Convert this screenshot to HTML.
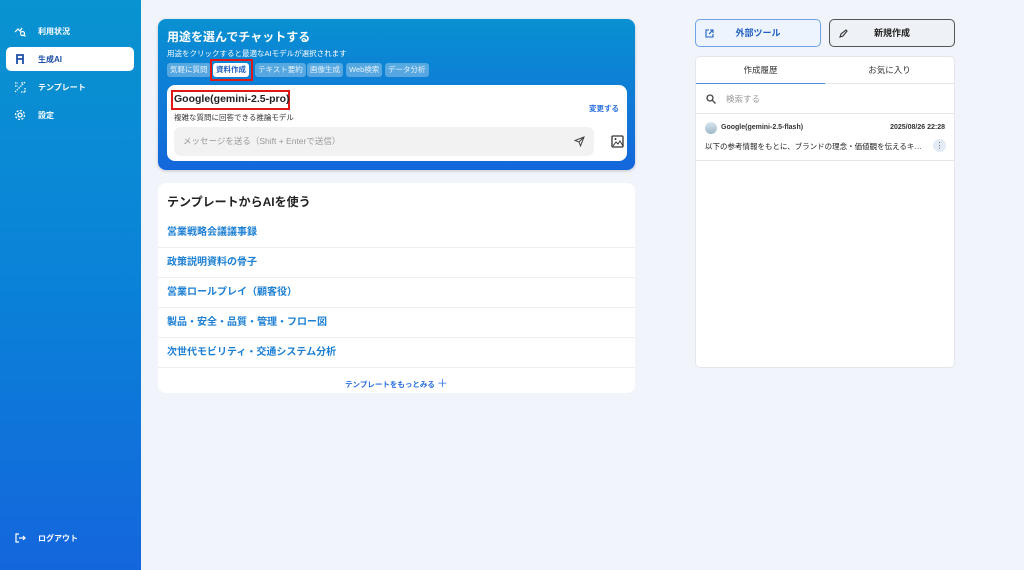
<!DOCTYPE html>
<html><head><meta charset="utf-8"><style>
*{box-sizing:border-box;margin:0;padding:0}
body{width:1024px;height:570px;background:#f1f5fb;font-family:"Liberation Sans","Noto Sans CJK JP",sans-serif;position:relative;overflow:hidden}
.side{position:absolute;left:0;top:0;width:141px;height:570px;background:linear-gradient(180deg,#0993d0 0%,#0a82d8 50%,#1466dc 100%)}
.nav{position:absolute;left:6px;width:128px;height:24px;color:#fff;font-size:8px;font-weight:bold;display:flex;align-items:center;padding-left:8px}
.nav svg{margin-right:12px}
.nav.act{background:#fff;color:#1e4fa8;border-radius:5px}
.card{position:absolute;border-radius:8px}
.hero{left:158px;top:19px;width:477px;height:151px;background:linear-gradient(180deg,#0991d2,#1467db);box-shadow:0 1px 3px rgba(0,0,0,.2)}
.chip{position:absolute;top:44px;height:14px;background:rgba(255,255,255,.3);color:#e8f2fb;font-size:7.5px;border-radius:3px;line-height:14px;padding:0 3px}
.inner{position:absolute;left:9px;top:66px;width:460px;height:76px;background:#fff;border-radius:8px}
.tpl{left:158px;top:183px;width:477px;height:210px;background:#fff}
.row{position:absolute;left:0;width:477px;height:30px;border-bottom:1.5px solid #eceff3;color:#1c7fd3;font-size:10px;font-weight:bold;padding-left:9px;line-height:30px}
.btn{position:absolute;top:19px;width:126px;height:28px;border-radius:5px;font-size:9px;font-weight:bold;text-align:center;line-height:26px}
</style></head><body>
<div class="side">
<div class="nav" style="top:19px"><svg width="12" height="12" viewBox="0 0 12 12" fill="none" stroke="#fff" stroke-width="1.2"><path d="M1 7l3-3 2 2 2-3"/><circle cx="8.5" cy="8.5" r="2"/><path d="M10 10l1.5 1.5"/></svg>利用状況</div>
<div class="nav act" style="top:47px"><svg width="12" height="12" viewBox="0 0 12 12" fill="none" stroke="#1e4fa8" stroke-width="1.8"><path d="M3 11V2h6v9M3 6h6"/></svg>生成AI</div>
<div class="nav" style="top:75px"><svg width="12" height="12" viewBox="0 0 12 12" fill="none" stroke="#fff" stroke-width="1.2"><path d="M1 2h3M1 5h3M8 1v3M1 11l10-10M7 11h4M11 7v4" stroke-dasharray="1.5 1"/></svg>テンプレート</div>
<div class="nav" style="top:103px"><svg width="12" height="12" viewBox="0 0 12 12" fill="none" stroke="#fff" stroke-width="1.3"><circle cx="6" cy="6" r="2"/><circle cx="6" cy="6" r="4.5" stroke-dasharray="2 1.5"/></svg>設定</div>
<div class="nav" style="top:526px"><svg width="12" height="12" viewBox="0 0 12 12" fill="none" stroke="#fff" stroke-width="1.2"><path d="M5 2H2v8h3M5 6h6M9 4l2 2-2 2"/></svg>ログアウト</div>
</div>
<div class="card hero">
<div style="position:absolute;left:9px;top:9px;color:#fff;font-size:12px;font-weight:bold">用途を選んでチャットする</div>
<div style="position:absolute;left:9px;top:29px;color:#fff;font-size:7.5px">用途をクリックすると最適なAIモデルが選択されます</div>
<div class="chip" style="left:9px">気軽に質問</div>
<div class="chip" style="left:55px;background:#fff;color:#1e5fc0;font-weight:bold">資料作成</div>
<div style="position:absolute;left:52px;top:40px;width:43px;height:22px;border:2px solid #e01818"></div>
<div class="chip" style="left:97px">テキスト要約</div>
<div class="chip" style="left:149px">画像生成</div>
<div class="chip" style="left:188px">Web検索</div>
<div class="chip" style="left:227px">データ分析</div>
<div class="inner">
<div style="position:absolute;left:4px;top:5px;width:119px;height:20px;border:2px solid #e01818"></div>
<div style="position:absolute;left:7px;top:8px;font-size:10.5px;font-weight:bold;color:#222">Google(gemini-2.5-pro)</div>
<div style="position:absolute;left:7px;top:27px;font-size:7.5px;color:#333">複雑な質問に回答できる推論モデル</div>
<div style="position:absolute;right:8px;top:18px;font-size:7.5px;font-weight:bold;color:#2a6fe0">変更する</div>
<div style="position:absolute;left:7px;top:42px;width:420px;height:29px;background:#f2f2f3;border-radius:7px;font-size:8.5px;color:#999;line-height:29px;padding-left:9px">メッセージを送る（Shift + Enterで送信）<svg style="position:absolute;right:9px;top:9px" width="11" height="11" viewBox="0 0 11 11" fill="none" stroke="#444" stroke-width="1"><path d="M10 1L1 4.5l4 1.5 1.5 4z M10 1L5 6"/></svg></div>
<svg style="position:absolute;left:444px;top:50px" width="13" height="13" viewBox="0 0 13 13"><rect x="1" y="1" width="11" height="11" rx="1" fill="none" stroke="#333" stroke-width="1.3"/><path d="M2 11l3-4 2 2 2-3 3 5" fill="none" stroke="#333"/><circle cx="4.5" cy="4" r="1" fill="#333"/></svg>
</div>
</div>
<div class="card tpl">
<div style="position:absolute;left:9px;top:10px;font-size:12px;font-weight:bold;color:#222">テンプレートからAIを使う</div>
<div class="row" style="top:35px">営業戦略会議議事録</div>
<div class="row" style="top:65px">政策説明資料の骨子</div>
<div class="row" style="top:95px">営業ロールプレイ（顧客役）</div>
<div class="row" style="top:125px">製品・安全・品質・管理・フロー図</div>
<div class="row" style="top:155px">次世代モビリティ・交通システム分析</div>
<div style="position:absolute;left:0;width:477px;top:192px;text-align:center;font-size:7.5px;font-weight:bold;color:#2a6fe0">テンプレートをもっとみる <span style="font-size:11px;font-weight:normal">＋</span></div>
</div>
<div class="btn" style="left:695px;border:1px solid #6fa3e8;color:#1e5fc0;background:#eef4fd"><svg style="position:absolute;left:9px;top:9px" width="9" height="9" viewBox="0 0 9 9" fill="none" stroke="#1e5fc0" stroke-width="1.1"><path d="M4 1H1v7h7V5M5 1h3v3M8 1L4 5"/></svg>外部ツール</div>
<div class="btn" style="left:829px;border:1px solid #555;color:#222;background:#eef1f6"><svg style="position:absolute;left:9px;top:9px" width="9" height="9" viewBox="0 0 9 9" fill="none" stroke="#333" stroke-width="1.1"><path d="M1 8l1-3 5-4 1 1-4 5z"/></svg>新規作成</div>
<div class="card" style="left:695px;top:56px;width:260px;height:312px;background:#fff;border:1px solid #e3e7ec;border-radius:5px">
<div style="position:absolute;left:0;top:0;width:129px;height:27px;border-bottom:1.5px solid #4a8fe0;text-align:center;line-height:27px;font-size:8.5px;color:#333">作成履歴</div>
<div style="position:absolute;left:129px;top:0;width:129px;height:27px;border-bottom:1px solid #e3e7ec;text-align:center;line-height:27px;font-size:8.5px;color:#333">お気に入り</div>
<div style="position:absolute;left:0;top:27px;width:258px;height:30px;border-bottom:1px solid #e3e7ec;font-size:8.5px;color:#999;line-height:30px;padding-left:30px"><svg style="position:absolute;left:10px;top:10px" width="10" height="10" viewBox="0 0 10 10" fill="none" stroke="#444" stroke-width="1.3"><circle cx="4" cy="4" r="3"/><path d="M6.2 6.2L9.5 9.5"/></svg>検索する</div>
<div style="position:absolute;left:9px;top:65px;width:12px;height:12px;border-radius:6px;background:linear-gradient(#d8e6f0,#9fb8c8)"></div>
<div style="position:absolute;left:25px;top:67px;font-size:7px;font-weight:bold;color:#333">Google(gemini-2.5-flash)</div>
<div style="position:absolute;right:9px;top:67px;font-size:7px;font-weight:bold;color:#333">2025/08/26 22:28</div>
<div style="position:absolute;left:9px;top:84px;font-size:7.5px;color:#222">以下の参考情報をもとに、ブランドの理念・価値観を伝えるキ…</div>
<div style="position:absolute;right:8px;top:82px;width:13px;height:13px;border-radius:7px;background:#e3ebf5;font-size:8px;text-align:center;line-height:13px;color:#555">⋮</div>
<div style="position:absolute;left:0;top:103px;width:258px;border-bottom:1px solid #e3e7ec"></div>
</div>
</body></html>
